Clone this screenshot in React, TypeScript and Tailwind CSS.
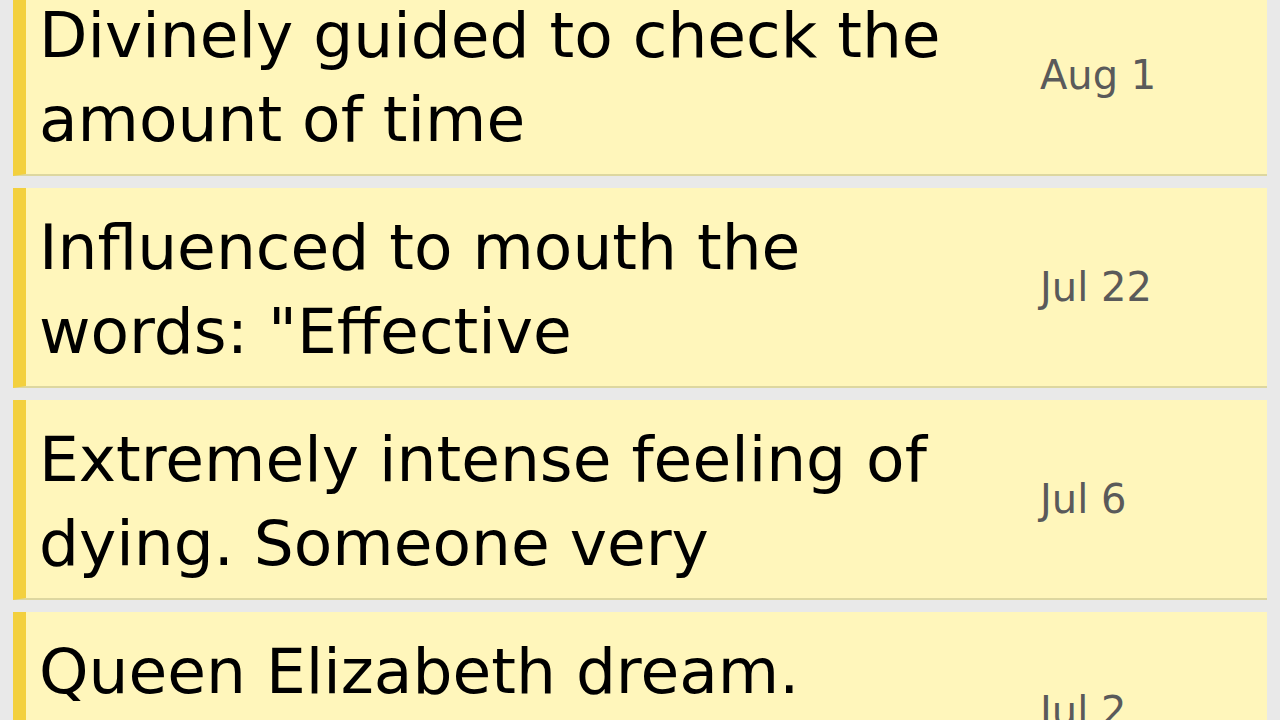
import React from "react";

const entries = [
  { text: "Divinely guided to check the amount of time", date: "Aug 1" },
  { text: 'Influenced to mouth the words: "Effective', date: "Jul 22" },
  { text: "Extremely intense feeling of dying. Someone very", date: "Jul 6" },
  { text: "Queen Elizabeth dream.\nStanding in a hall", date: "Jul 2" },
];

function EntryCard({ text, date }: { text: string; date: string }) {
  return (
    <div className="flex items-center bg-[#fff6bb] border-l-[13px] border-[#f3d03e] border-b-2 border-b-[#ddd7a0] py-[15px]">
      <div className="w-[990px] shrink-0 pl-[13px] pr-[27px] pt-[3px] h-[168px] overflow-hidden whitespace-pre-line text-[63px] leading-[84px] text-black">
        {text}
      </div>
      <div className="flex-1 pl-[24px] text-[40px] text-[#5a5a5a]">{date}</div>
    </div>
  );
}

export default function App() {
  return (
    <div
      className="h-[720px] overflow-hidden bg-[#e9e9e9] px-[13px]"
      style={{ fontFamily: '"DejaVu Sans", sans-serif' }}
    >
      <div className="-mt-[24px] flex flex-col gap-[12px]">
        {entries.map((e) => (
          <EntryCard key={e.date} text={e.text} date={e.date} />
        ))}
      </div>
    </div>
  );
}
